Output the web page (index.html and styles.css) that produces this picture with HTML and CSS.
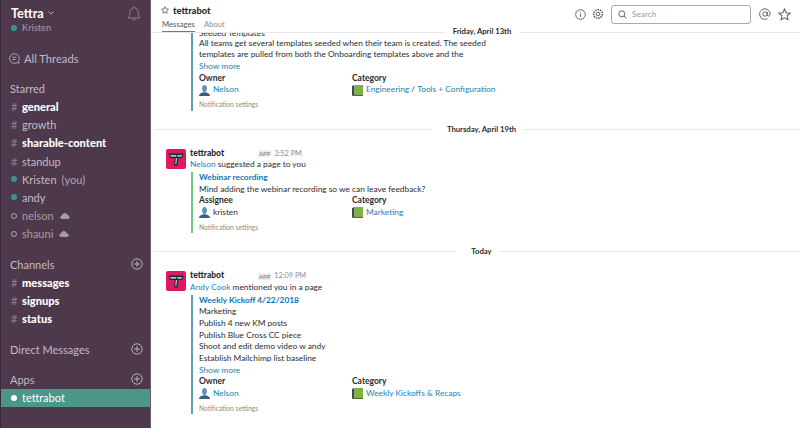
FILE: index.html
```html
<!DOCTYPE html>
<html lang="en">
<head>
    <meta charset="UTF-8">
    <meta name="viewport" content="width=device-width, initial-scale=1.0">
    <title>Tettra - tettrabot</title>
    <link rel="stylesheet" href="styles.css">
</head>
<body>
    <svg class="sprites" width="0" height="0">
        <symbol id="plus" viewBox="0 0 12 12"><circle cx="6" cy="6" r="5.2" fill="none" stroke="currentColor"/><path d="M6 3v6M3 6h6" stroke="currentColor" fill="none"/></symbol>
        <symbol id="cloud" viewBox="0 0 11 7"><path d="M2.2 7C.9 7 0 6.1 0 5s.8-1.9 1.9-2C2.2 1.300 3.500 0 5.300 0c1.700 0 3 1.100 3.300 2.700C9.900 2.800 11 3.700 11 5s-1 2-2.200 2z" fill="currentColor"/></symbol>
        <symbol id="person" viewBox="0 0 12 12"><path d="M3.300 3.500C3.300 1.400 4.500 0 6 0s2.700 1.400 2.700 3.500c0 1.500-.6 2.700-1.300 3.400-.2.600 0 1 .6 1.300H4c.6-.3.800-.7.600-1.300C3.900 6.200 3.300 5 3.300 3.500z" fill="#5f93bd"/><path d="M0 12c0-2 1.700-3 4-3.800h4c2.300.8 4 1.800 4 3.800z" fill="#3a5f80"/></symbol>
        <symbol id="book" viewBox="0 0 11 11"><path d="M0 1 2.500 0v9.500L0 11z" fill="#3d4f3a"/><path d="M2.500 0H11v9.500H2.500z" fill="#7cb342"/><path d="M0 11l2.500-1.500H11V11z" fill="#4e6a2c"/></symbol>
        <symbol id="tettra" viewBox="0 0 20 20"><rect width="20" height="20" rx="2" fill="#e0195f"/><path d="M2.500 4.500h15l-1.200 4.500h-3.800l-1 7.500H8l.8-7.500H4z" fill="#1d2a33"/><path d="M4 6h6.500l-.5 1.800H5zM11.500 6H16l-.5 1.800h-4.300z" fill="#7fd3d0"/><path d="M9.800 9h1.400l-.8 6H9.200z" fill="#7fd3d0"/></symbol>
    </svg>

    <div class="layout">
        <!-- Sidebar -->
        <nav class="sidebar">
            <div class="team">
                <div class="team-top">
                    <span class="team-name">Tettra</span>
                    <svg class="chevron" width="6" height="4" viewBox="0 0 6 4"><path d="M.5.5 3 3 5.500.5" fill="none" stroke="#b9aeb8"/></svg>
                    <svg class="bell" width="14" height="15" viewBox="0 0 14 15"><path d="M1 12c1.500-1.500 1.600-3 1.800-5.500C3 3.500 4.800 1.800 7 1.800s4 1.700 4.200 4.700c.2 2.500.3 4 1.800 5.500zM5.500 12.500c.2 1.300.8 2 1.500 2s1.300-.7 1.500-2M7 .5v1.300" fill="none" stroke="#8d7f8b"/></svg>
                </div>
                <div class="team-user"><span class="dot"></span>Kristen</div>
            </div>

            <div class="threads">
                <svg width="11" height="11" viewBox="0 0 11 11"><path d="M5.500.7a4.800 4.800 0 1 0 2.600 8.800l2 .8-.6-2A4.800 4.800 0 0 0 5.500.7zM3.500 4.300h4M3.500 6.500h3" fill="none" stroke="#b9aeb8" stroke-width=".9"/></svg>
                All Threads
            </div>

            <div class="section">
                <div class="section-title">Starred</div>
                <div class="row unread"><span class="hash">#</span>general</div>
                <div class="row"><span class="hash">#</span>growth</div>
                <div class="row unread"><span class="hash">#</span>sharable-content</div>
                <div class="row"><span class="hash">#</span>standup</div>
                <div class="row"><span class="marker"><span class="dot"></span></span>Kristen<span class="you">(you)</span></div>
                <div class="row"><span class="marker"><span class="dot"></span></span>andy</div>
                <div class="row away"><span class="marker"><span class="ring"></span></span>nelson<svg class="cloud"><use href="#cloud"/></svg></div>
                <div class="row away"><span class="marker"><span class="ring"></span></span>shauni<svg class="cloud"><use href="#cloud"/></svg></div>
            </div>

            <div class="section">
                <div class="section-title">Channels<svg class="plus"><use href="#plus"/></svg></div>
                <div class="row unread"><span class="hash">#</span>messages</div>
                <div class="row unread"><span class="hash">#</span>signups</div>
                <div class="row unread"><span class="hash">#</span>status</div>
            </div>

            <div class="section">
                <div class="section-title">Direct Messages<svg class="plus"><use href="#plus"/></svg></div>
            </div>

            <div class="section">
                <div class="section-title">Apps<svg class="plus"><use href="#plus"/></svg></div>
                <div class="row active"><span class="marker"><span class="dot white"></span></span>tettrabot</div>
            </div>
        </nav>

        <main class="main">
            <!-- Header -->
            <header class="header">
                <div class="header-left">
                    <div class="title"><svg width="8" height="8" viewBox="0 0 12 12"><path d="M6 1l1.500 3.400 3.700.4-2.800 2.400.8 3.600L6 9l-3.200 1.800.8-3.600L.8 4.800l3.700-.4z" fill="none" stroke="#555" stroke-width="1.100"/></svg>tettrabot</div>
                    <div class="tabs">
                        <span class="tab current">Messages</span>
                        <span class="tab">About</span>
                    </div>
                </div>
                <div class="tools">
                    <svg width="11" height="11" viewBox="0 0 11 11"><circle cx="5.500" cy="5.500" r="4.800" fill="none" stroke="#666"/><path d="M5.500 5v3M5.500 3v1" stroke="#666" fill="none"/></svg>
                    <svg class="gear" width="12" height="12" viewBox="0 0 12 12"><circle cx="6" cy="6" r="1.800" fill="none" stroke="#666"/><circle cx="6" cy="6" r="4.300" fill="none" stroke="#666" stroke-width="1.700" stroke-dasharray="1.500 .9"/></svg>
                    <div class="search">
                        <svg width="9" height="9" viewBox="0 0 9 9"><circle cx="3.800" cy="3.800" r="3" fill="none" stroke="#666"/><path d="M6 6l2.500 2.500" stroke="#666"/></svg>
                        Search
                    </div>
                    <svg class="at" width="12" height="12" viewBox="0 0 12 12"><circle cx="6" cy="6" r="2.200" fill="none" stroke="#666"/><path d="M8.200 3.800V7c0 1.700 3 1.500 3-1A5.300 5.300 0 1 0 8.500 10.700" fill="none" stroke="#666"/></svg>
                    <svg class="star" width="13" height="13" viewBox="0 0 12 12"><path d="M6 1l1.500 3.400 3.700.4-2.800 2.400.8 3.600L6 9l-3.200 1.800.8-3.600L.8 4.800l3.700-.4z" fill="none" stroke="#666"/></svg>
                </div>
            </header>

            <!-- sticky date, sits on the header rule -->
            <span class="day-label sticky-day">Friday, April 13th</span>

            <!-- Messages -->
            <div class="messages">
                <div class="attachment blue clipped">
                    <div class="line first">Seeded Templates</div>
                    <div class="line">All teams get several templates seeded when their team is created. The seeded</div>
                    <div class="line">templates are pulled from both the Onboarding templates above and the</div>
                    <div class="line"><a>Show more</a></div>
                    <div class="fields">
                        <div class="field">
                            <div class="field-name">Owner</div>
                            <div class="field-value"><svg class="icon"><use href="#person"/></svg><a>Nelson</a></div>
                        </div>
                        <div class="field">
                            <div class="field-name">Category</div>
                            <div class="field-value"><svg class="icon"><use href="#book"/></svg><a>Engineering</a>&nbsp;/&nbsp;<a>Tools + Configuration</a></div>
                        </div>
                    </div>
                    <div class="settings">Notification settings</div>
                </div>

                <div class="day"><span class="day-label">Thursday, April 19th</span></div>

                <div class="message">
                    <svg class="avatar"><use href="#tettra"/></svg>
                    <div class="body">
                        <div class="meta"><b>tettrabot</b><span class="app-tag">APP</span><span class="time">3:52 PM</span></div>
                        <div class="line"><a>Nelson</a> suggested a page to you</div>
                        <div class="attachment green">
                            <div class="line"><a class="strong">Webinar recording</a></div>
                            <div class="line">Mind adding the webinar recording so we can leave feedback?</div>
                            <div class="fields">
                                <div class="field">
                                    <div class="field-name">Assignee</div>
                                    <div class="field-value"><svg class="icon"><use href="#person"/></svg>kristen</div>
                                </div>
                                <div class="field">
                                    <div class="field-name">Category</div>
                                    <div class="field-value"><svg class="icon"><use href="#book"/></svg><a>Marketing</a></div>
                                </div>
                            </div>
                            <div class="settings">Notification settings</div>
                        </div>
                    </div>
                </div>

                <div class="day"><span class="day-label">Today</span></div>

                <div class="message">
                    <svg class="avatar"><use href="#tettra"/></svg>
                    <div class="body">
                        <div class="meta"><b>tettrabot</b><span class="app-tag">APP</span><span class="time">12:09 PM</span></div>
                        <div class="line"><a>Andy Cook</a> mentioned you in a page</div>
                        <div class="attachment blue">
                            <div class="line"><a class="strong">Weekly Kickoff 4/22/2018</a></div>
                            <div class="line">Marketing</div>
                            <div class="line">Publish 4 new KM posts</div>
                            <div class="line">Publish Blue Cross CC piece</div>
                            <div class="line">Shoot and edit demo video w andy</div>
                            <div class="line">Establish Mailchimp list baseline</div>
                            <div class="line"><a>Show more</a></div>
                            <div class="fields">
                                <div class="field">
                                    <div class="field-name">Owner</div>
                                    <div class="field-value"><svg class="icon"><use href="#person"/></svg><a>Nelson</a></div>
                                </div>
                                <div class="field">
                                    <div class="field-name">Category</div>
                                    <div class="field-value"><svg class="icon"><use href="#book"/></svg><a>Weekly Kickoffs &amp; Recaps</a></div>
                                </div>
                            </div>
                            <div class="settings">Notification settings</div>
                        </div>
                    </div>
                </div>
            </div>
        </main>
    </div>
</body>
</html>
```

FILE: styles.css
```css
body {
    font-family: Lato, "Open Sans", sans-serif;
    margin: 0;
    background: #fff;
    color: #2c2d30;
    overflow: hidden;
}

.sprites {
    display: none;
}

.layout {
    display: flex;
    width: 800px;
    height: 428px;
    overflow: hidden;
}

/* Sidebar */
.sidebar {
    flex: 0 0 151px;
    box-sizing: border-box;
    background: #4d394b;
    border-left: 1px solid #3b2a39;
    border-right: 1px solid #6e5a6c;
    color: #c3bac2;
    font-size: 11px;
}

.team {
    padding: 5px 0 0 10px;
}

.team-top {
    display: flex;
    align-items: center;
    height: 16px;
}

.team-name {
    color: #fff;
    font-weight: 700;
    font-size: 12.7px;
}

.chevron {
    margin-left: 4px;
}

.bell {
    margin-left: auto;
    margin-right: 9px;
}

.team-user {
    display: flex;
    align-items: center;
    height: 13px;
    font-size: 9.300px;
    color: #a79ba5;
}

.team-user .dot {
    margin-right: 5px;
}

.dot {
    display: inline-block;
    width: 6px;
    height: 6px;
    border-radius: 50%;
    background: #38978d;
}

.dot.white {
    background: #fff;
}

.ring {
    display: inline-block;
    box-sizing: border-box;
    width: 6px;
    height: 6px;
    border-radius: 50%;
    border: 1px solid #b0a4ae;
}

.threads {
    display: flex;
    align-items: center;
    gap: 4px;
    height: 18px;
    margin-top: 15px;
    padding-left: 8px;
    font-size: 11.200px;
}

.section {
    margin-top: 12.200px;
}

.section-title {
    display: flex;
    align-items: center;
    justify-content: space-between;
    height: 18.200px;
    padding: 0 7px 0 9px;
    font-size: 11px;
}

.plus {
    width: 12px;
    height: 12px;
    color: #b9aeb8;
}

.row {
    display: flex;
    align-items: center;
    height: 18.200px;
    padding-left: 10px;
    white-space: nowrap;
}

.hash,
.marker {
    flex: 0 0 11px;
    color: #8d7f8b;
    font-weight: 400;
}

.marker {
    display: flex;
    align-items: center;
}

.unread {
    color: #fff;
    font-weight: 900;
    font-size: 11.100px;
}

.you {
    margin-left: 5px;
    color: #b0a4ae;
}

.away {
    color: #a79ba5;
}

.cloud {
    width: 10px;
    height: 6px;
    margin-left: 6px;
    color: #a79ba5;
}

.active {
    background: #4c9689;
    color: #fff;
}

/* Header */
.main {
    flex: 1;
    min-width: 0;
    display: flex;
    flex-direction: column;
    position: relative;
}

.header {
    flex: 0 0 31px;
    display: flex;
    justify-content: space-between;
    border-bottom: 1px solid #e8e8e8;
}

.header-left {
    padding-left: 11px;
}

.title {
    display: flex;
    align-items: center;
    gap: 4px;
    height: 18px;
    padding-top: 1px;
    margin-left: -1px;
    font-size: 9.400px;
    font-weight: 900;
}

.tabs {
    display: flex;
    gap: 9px;
    font-size: 7.700px;
    color: #8b8c8e;
}

.tab {
    height: 12px;
    line-height: 11px;
}

.tab.current {
    color: #555;
    border-bottom: 1px solid #777;
}

.tools {
    display: flex;
    align-items: center;
    padding-right: 9px;
    height: 28px;
}

.gear {
    margin-left: 6px;
}

.search {
    display: flex;
    align-items: center;
    gap: 5px;
    box-sizing: border-box;
    width: 140px;
    height: 19px;
    margin-left: 7px;
    padding-left: 6px;
    border: 1px solid #a9a9a9;
    border-radius: 3px;
    font-size: 8.300px;
    color: #999;
}

.at {
    margin-left: 8px;
}

.star {
    margin-left: 7px;
}

/* Messages */
.messages {
    flex: 1;
    overflow: hidden;
    font-size: 8.350px;
    line-height: 11.670px;
}

a {
    color: #1d7fb8;
}

a.strong {
    font-weight: 700;
    color: #0f76b5;
}

.day {
    display: flex;
    align-items: center;
    gap: 7px;
    margin: 12.700px 0 0 3px;
}

.day::before,
.day::after {
    content: "";
    flex: 1;
    height: 1px;
    background: #eaeaea;
}

.day-label {
    margin-left: 9px;
    font-size: 7.700px;
    font-weight: 700;
    line-height: 11.670px;
}

.sticky-day {
    position: absolute;
    top: 25.500px;
    left: 331px;
    transform: translateX(-50%);
    margin: 0;
    padding: 0 7px;
    background: #fff;
    white-space: nowrap;
    z-index: 1;
}

.attachment {
    box-sizing: border-box;
    padding-left: 6px;
    border-left: 2px solid #5d9fb1;
}

.attachment.green {
    border-left-color: #6fc983;
}

.message .attachment {
    margin: 1px 0 0 1px;
}

.clipped {
    margin-left: 40px;
    overflow: hidden;
}

.first {
    height: 4.800px;
    line-height: 0;
}

.message {
    display: flex;
    gap: 4px;
    margin: 12.500px 0 0 15px;
}

.avatar {
    flex: 0 0 20px;
    width: 20px;
    height: 20px;
    margin-top: 1px;
}

.body {
    flex: 1;
    min-width: 0;
}

.meta {
    display: flex;
    align-items: center;
    height: 11.670px;
}

.meta b {
    flex: 0 0 68px;
    font-weight: 900;
    font-size: 8.500px;
}

.app-tag {
    font-size: 6px;
    color: #777;
    background: #eee;
    padding: 0 1px;
    line-height: 7px;
}

.time {
    margin-left: 3px;
    font-size: 7.300px;
    color: #8b8c8e;
}

.fields {
    display: flex;
}

.field {
    flex: 0 0 153px;
}

.field-name {
    font-weight: 700;
    font-size: 8.500px;
}

.field-value {
    display: flex;
    align-items: center;
    white-space: nowrap;
}

.icon {
    width: 11px;
    height: 11px;
    margin-right: 3px;
}

.settings {
    margin-top: 3px;
    font-size: 6.700px;
    color: #8b8c8e;
}
```
